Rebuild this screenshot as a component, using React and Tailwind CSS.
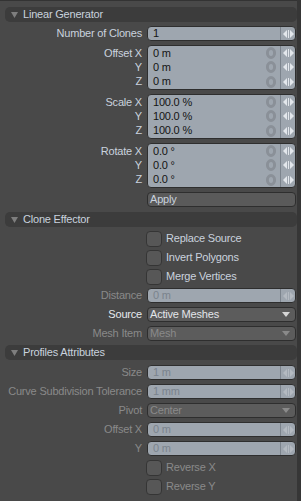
import React from "react";

const FONT = { fontFamily: '"Liberation Sans", Arial, sans-serif' };

function Tri() {
  return (
    <svg width="7" height="6" viewBox="0 0 7 6" className="shrink-0">
      <path d="M0 0 H7 L3.5 6 Z" fill="#7e7e7e" />
    </svg>
  );
}

function Header({ title }) {
  return (
    <div className="h-[15px] rounded-[5px] bg-[#3c3c3c] flex items-center pl-[6px] gap-[5px] text-[#c9d2de]">
      <Tri />
      <span className="leading-none">{title}</span>
    </div>
  );
}

function Spin({ dim }) {
  const c = dim ? "#b4bac1" : "#e3e7ec";
  return (
    <div className="w-[15px] h-full flex items-center justify-center border-l border-[#7b838c] shrink-0">
      <svg width="11" height="8" viewBox="0 0 11 8">
        <path d="M0 4 L4 0 V8 Z" fill={c} />
        <rect x="5" y="0" width="1" height="8" fill={c} />
        <path d="M11 4 L7 0 V8 Z" fill={c} />
      </svg>
    </div>
  );
}

function Key() {
  return (
    <svg width="12" height="12" viewBox="0 0 12 12" className="mr-[3px] shrink-0">
      <ellipse cx="6" cy="6" rx="3.6" ry="4.4" fill="none" stroke="#8a9098" strokeWidth="3" />
    </svg>
  );
}

function FieldLine({ value }) {
  return (
    <div className="flex-1 min-h-0 flex items-center">
      <span className="flex-1 pl-[5px] leading-none text-[#141414]">{value}</span>
      <Key />
      <Spin />
    </div>
  );
}

function Label({ children, dim, white, grow }) {
  return (
    <div
      className={
        (grow ? "flex-1 " : "h-[15px] ") +
        "flex items-center justify-end leading-none whitespace-nowrap " +
        (dim ? "text-[#8a8a8a]" : white ? "text-[#e6e9ee]" : "text-[#c9d2de]")
      }
    >
      {children}
    </div>
  );
}

function Row({ label, dim, white, children }) {
  return (
    <div className="grid grid-cols-[137px_149px] gap-x-[5px] h-[15px]">
      <div className="min-w-0 flex justify-end">{label && <Label dim={dim} white={white}>{label}</Label>}</div>
      {children}
    </div>
  );
}

function NumField({ value, dim }) {
  return (
    <div className="h-[15px] rounded-[4px] border border-[#2e2e2e] bg-[#9ea6af] flex items-center overflow-hidden">
      <span className={"flex-1 pl-[5px] leading-none " + (dim ? "text-[#7a838d]" : "text-[#141414]")}>{value}</span>
      <Spin dim={dim} />
    </div>
  );
}

function Group({ labels, values }) {
  return (
    <div className="grid grid-cols-[137px_149px] gap-x-[5px] h-[45px]">
      <div className="flex flex-col py-[1px]">
        {labels.map((l) => (
          <Label key={l} grow>
            {l}
          </Label>
        ))}
      </div>
      <div className="rounded-[4px] border border-[#2e2e2e] bg-[#9ea6af] overflow-hidden flex flex-col">
        {values.map((v, i) => (
          <FieldLine key={i} value={v} />
        ))}
      </div>
    </div>
  );
}

function Check({ label, dim }) {
  return (
    <Row>
      <div className="flex items-center gap-[4px] -ml-[1px] h-[15px]">
        <div className="w-[16px] h-[16px] shrink-0 rounded-[4px] bg-[#575757] border border-[#353535]" />
        <span className={"leading-none " + (dim ? "text-[#8a8a8a]" : "text-[#c9d2de]")}>{label}</span>
      </div>
    </Row>
  );
}

function Drop({ value, dim }) {
  return (
    <div className="h-[15px] rounded-[4px] border border-[#2e2e2e] bg-[#5c5c5c] flex items-center pl-[2px] pr-[5px]">
      <span className={"flex-1 leading-none " + (dim ? "text-[#8a8a8a]" : "text-[#e3e6ea]")}>{value}</span>
      <svg width="8" height="5" viewBox="0 0 8 5">
        <path d="M0 0 H8 L4 5 Z" fill={dim ? "#8a8a8a" : "#d6d6d6"} />
      </svg>
    </div>
  );
}

export default function App() {
  return (
    <div className="w-[301px] h-[501px] bg-[#494949] flex text-[11px] tracking-[-0.2px] overflow-hidden" style={FONT}>
      <div className="w-[297px] border-t border-[#333] flex flex-col gap-[4px] pt-[6px] pl-[5px]">
        <Header title="Linear Generator" />
        <Row label="Number of Clones">
          <NumField value="1" />
        </Row>
        <Group labels={["Offset X", "Y", "Z"]} values={["0 m", "0 m", "0 m"]} />
        <Group labels={["Scale X", "Y", "Z"]} values={["100.0 %", "100.0 %", "100.0 %"]} />
        <Group labels={["Rotate X", "Y", "Z"]} values={["0.0 °", "0.0 °", "0.0 °"]} />
        <Row>
          <div className="h-[15px] rounded-[4px] border border-[#2e2e2e] bg-[#5a5a5a] flex items-center pl-[2px] text-[#c9d2de] leading-none">
            Apply
          </div>
        </Row>
        <div className="mt-[1px]">
          <Header title="Clone Effector" />
        </div>
        <Check label="Replace Source" />
        <Check label="Invert Polygons" />
        <Check label="Merge Vertices" />
        <Row label="Distance" dim>
          <NumField value="0 m" dim />
        </Row>
        <Row label="Source" white>
          <Drop value="Active Meshes" />
        </Row>
        <Row label="Mesh Item" dim>
          <Drop value="Mesh" dim />
        </Row>
        <Header title="Profiles Attributes" />
        <div className="mt-[1px]">
          <Row label="Size" dim>
            <NumField value="1 m" dim />
          </Row>
        </div>
        <Row label="Curve Subdivision Tolerance" dim>
          <NumField value="1 mm" dim />
        </Row>
        <Row label="Pivot" dim>
          <Drop value="Center" dim />
        </Row>
        <Row label="Offset X" dim>
          <NumField value="0 m" dim />
        </Row>
        <Row label="Y" dim>
          <NumField value="0 m" dim />
        </Row>
        <Check label="Reverse X" dim />
        <Check label="Reverse Y" dim />
      </div>
      <div className="w-[4px] bg-[#363636]" />
    </div>
  );
}
